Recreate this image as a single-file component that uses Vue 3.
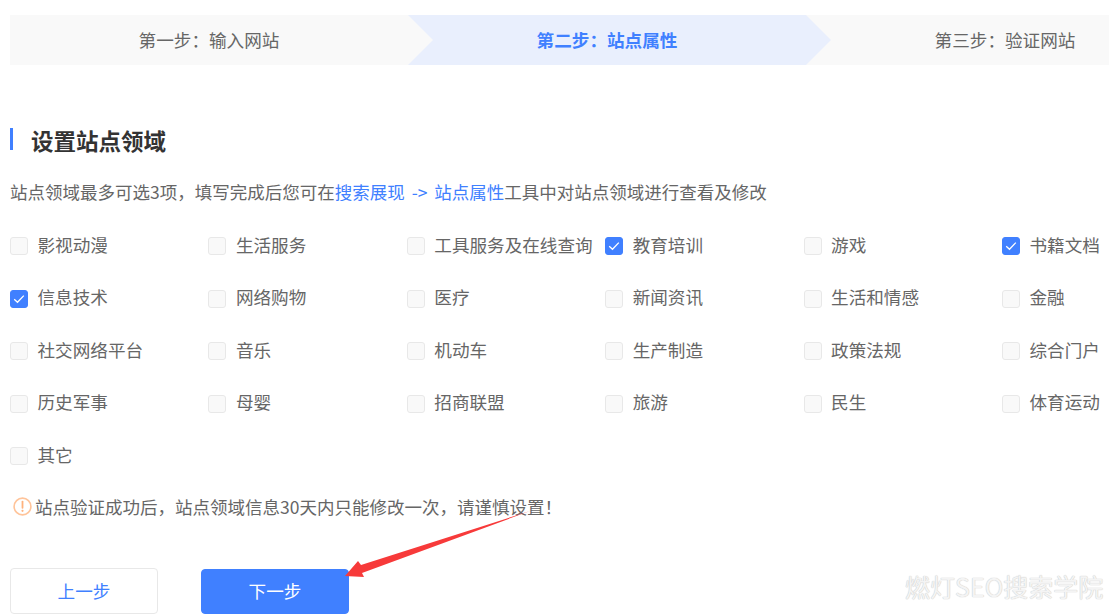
<template>
  <div class="page">
    <div class="steps">
      <div class="step">第一步：输入网站</div>
      <div class="step active">第二步：站点属性</div>
      <div class="step">第三步：验证网站</div>
    </div>

    <h2 class="title">设置站点领域</h2>
    <p class="desc">
      站点领域最多可选3项，填写完成后您可在<a class="link">搜索展现 -&gt; 站点属性</a>工具中对站点领域进行查看及修改
    </p>

    <div class="domains">
      <label v-for="item in domains" :key="item.name" class="domain">
        <span class="box" :class="{ checked: item.checked }">
          <svg v-if="item.checked" width="12" height="10" viewBox="0 0 12 10">
            <path d="M1.2 5.2 4.5 8.3 10.8 1.6" fill="none" stroke="#fff" stroke-width="1.3" />
          </svg>
        </span>
        <span class="name">{{ item.name }}</span>
      </label>
    </div>

    <div class="notice">
      <svg class="notice-icon" width="19" height="19" viewBox="0 0 19 19">
        <circle cx="9.5" cy="9.5" r="8.4" fill="none" stroke="#ffc49a" stroke-width="1.6" />
        <path d="M9.5 4.6v6.2" stroke="#ffb27d" stroke-width="1.8" stroke-linecap="round" />
        <circle cx="9.5" cy="13.8" r="1.1" fill="#ffb27d" />
      </svg>
      <span>站点验证成功后，站点领域信息30天内只能修改一次，请谨慎设置！</span>
    </div>

    <div class="actions">
      <button type="button" class="btn">上一步</button>
      <button type="button" class="btn primary">下一步</button>
    </div>

    <svg class="arrow" width="200" height="80" viewBox="0 0 200 80">
      <path d="M190 6 21 60 18 56 5 71 24 72 22 68Z" fill="#f73a3a" />
    </svg>
    <div class="watermark">燃灯SEO搜索学院</div>
  </div>
</template>

<script setup>
const names = [
  '影视动漫', '生活服务', '工具服务及在线查询', '教育培训', '游戏', '书籍文档',
  '信息技术', '网络购物', '医疗', '新闻资讯', '生活和情感', '金融',
  '社交网络平台', '音乐', '机动车', '生产制造', '政策法规', '综合门户',
  '历史军事', '母婴', '招商联盟', '旅游', '民生', '体育运动',
  '其它',
]
const selected = ['教育培训', '书籍文档', '信息技术']

const domains = names.map((name) => ({ name, checked: selected.includes(name) }))
</script>

<style>
html,
body {
  margin: 0;
  height: 616px;
  overflow: hidden;
  background: #fff;
}
</style>

<style scoped>
.page {
  position: relative;
  width: 1109px;
  height: 616px;
  overflow: hidden;
  padding: 15px 0 0 10px;
  box-sizing: border-box;
  font-family: "Noto Sans CJK SC", "Noto Sans", sans-serif;
  font-size: 17.6px;
  color: #666;
}

.steps {
  display: flex;
  height: 50px;
  width: 1099px;
  background: #f9f9f9;
  overflow: hidden;
}

.step {
  flex: 0 0 398px;
  line-height: 50px;
  text-align: center;
}

.step.active {
  flex: 0 0 423px;
  margin-right: -25px;
  padding-right: 25px;
  box-sizing: border-box;
  background: #e9effd;
  color: #4080ff;
  font-weight: 700;
  clip-path: polygon(0 0, 398px 0, 100% 50%, 398px 100%, 0 100%, 25px 50%);
}

.title {
  margin: 62px 0 0;
  height: 26px;
  padding-left: 21px;
  line-height: 26px;
  font-size: 22.5px;
  font-weight: 700;
  color: #333;
  position: relative;
}

.title::before {
  content: "";
  position: absolute;
  left: 0;
  top: 1px;
  width: 3px;
  height: 22px;
  background: #4080ff;
}

.desc {
  margin: 26px 0 0;
  line-height: 26px;
  font-size: 17.5px;
  white-space: nowrap;
}

.link {
  color: #4080ff;
  word-spacing: 3px;
}

.domains {
  display: grid;
  grid-template-columns: repeat(6, 198.4px);
  grid-auto-rows: 52.5px;
  margin-top: 13px;
}

.domain {
  display: flex;
  align-items: center;
  white-space: nowrap;
}

.box {
  flex: none;
  display: flex;
  align-items: center;
  justify-content: center;
  width: 18px;
  height: 18px;
  margin: 4px 10px 0 0;
  box-sizing: border-box;
  border: 1px solid #e8e8e8;
  border-radius: 3px;
  background: #f9f9f9;
}

.box.checked {
  border-color: #4080ff;
  background: #4080ff;
}

.name {
  margin-left: -0.5px;
}

.notice {
  display: flex;
  align-items: center;
  height: 26px;
  margin: 13px 0 0 3px;
  font-size: 17.5px;
  white-space: nowrap;
}

.notice-icon {
  margin-right: 3px;
}

.actions {
  display: flex;
  align-items: flex-end;
  gap: 43px;
  margin-top: 48px;
}

.btn {
  width: 148px;
  height: 46px;
  padding: 0;
  box-sizing: border-box;
  border: 1px solid #e8e8e8;
  border-radius: 4px;
  background: #fff;
  color: #4080ff;
  font: inherit;
}

.btn.primary {
  height: 45px;
  padding-bottom: 2px;
  border-color: #4080ff;
  background: #4080ff;
  color: #fff;
}

.arrow {
  position: absolute;
  left: 340px;
  top: 505px;
}

.watermark {
  position: absolute;
  left: 905px;
  top: 569px;
  font-size: 25px;
  line-height: 34px;
  white-space: nowrap;
  color: #f4f4f4;
  text-shadow: 0 0 1px #ccc, 0 0 1px #ccc;
}
</style>
